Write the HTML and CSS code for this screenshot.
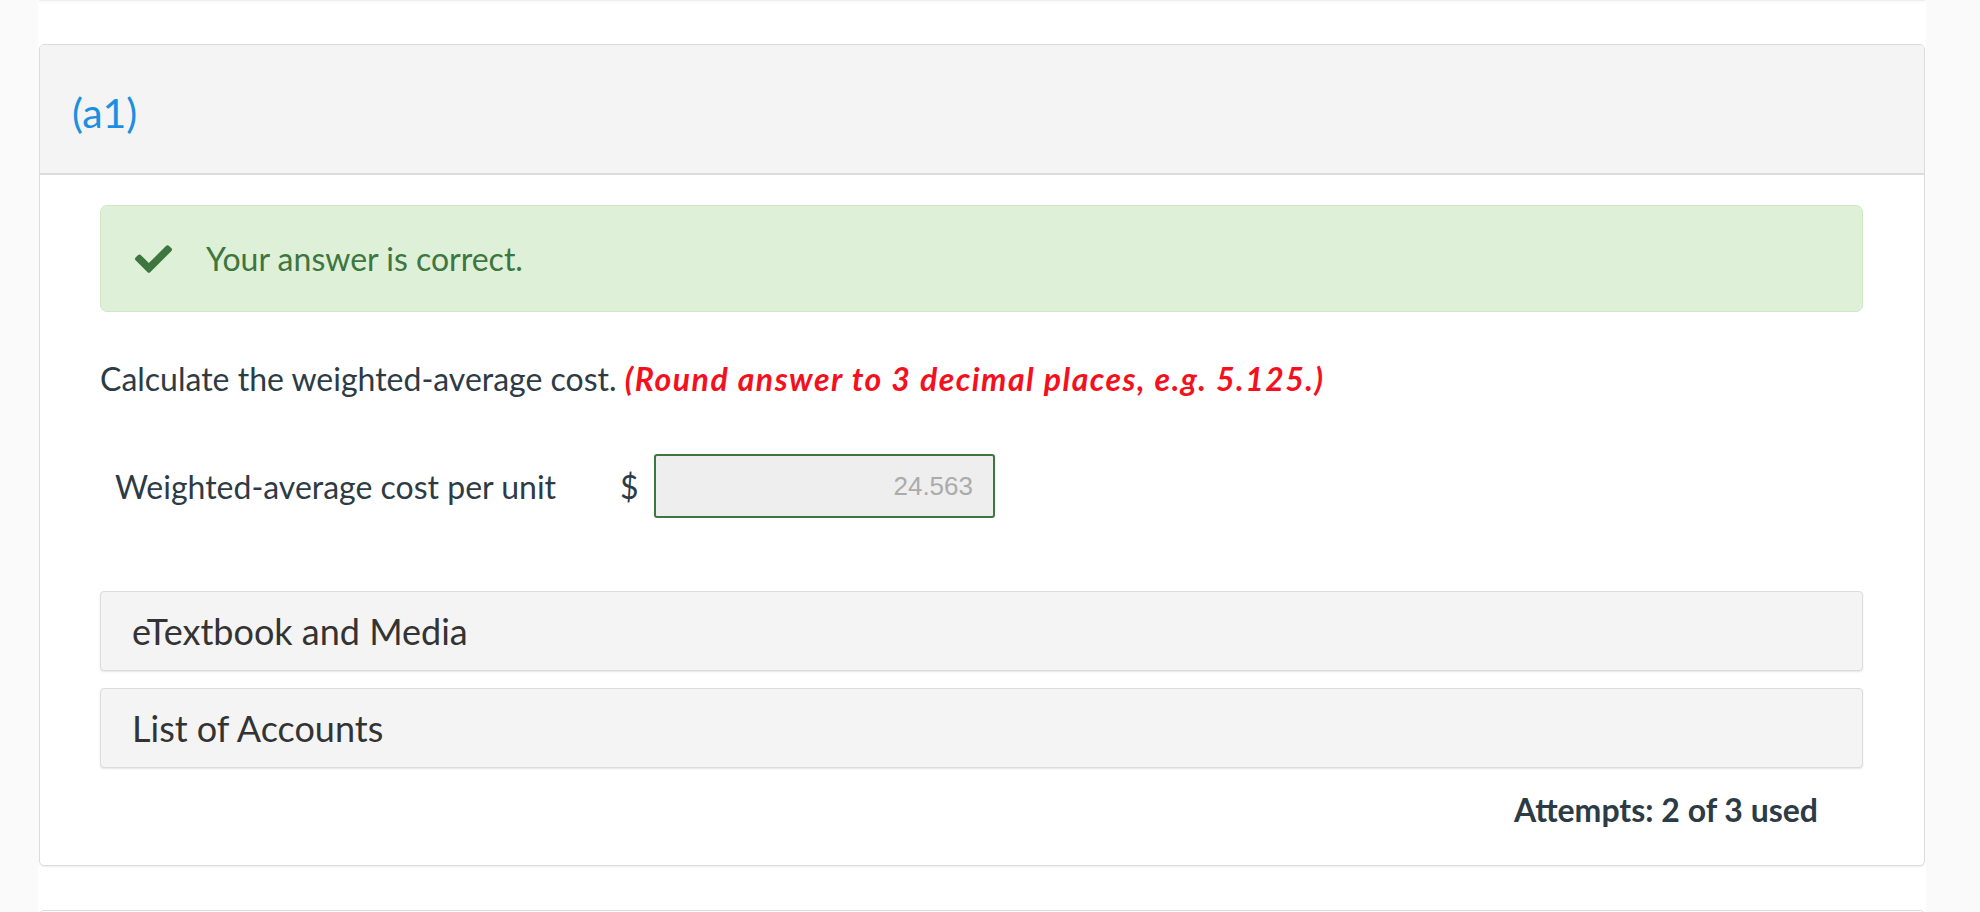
FILE: index.html
```html
<!DOCTYPE html>
<html>
<head>
<title>Question (a1)</title>
<link rel="stylesheet" href="styles.css">
</head>
<body>
    <div class="page">
        <div class="prev-card"></div>

        <div class="card">
            <div class="card-header">
                <span class="part-label">(a1)</span>
            </div>
            <div class="card-body">
                <div class="alert-success">
                    <svg class="check-icon" viewBox="0 64 512 384" aria-hidden="true">
                        <path d="M173.9 439.4l-166.4-166.4c-10-10-10-26.2 0-36.2l36.2-36.2c10-10 26.2-10 36.2 0L192 312.7 432.1 72.6c10-10 26.2-10 36.2 0l36.2 36.2c10 10 10 26.2 0 36.2l-294.4 294.4c-10 10-26.2 10-36.2 0z"/>
                    </svg>
                    <span>Your answer is correct.</span>
                </div>

                <p class="question">Calculate the weighted-average cost. <em class="hint">(Round answer to 3 decimal places, e.g. 5.125.)</em></p>

                <div class="answer-row">
                    <label class="answer-label" for="answer">Weighted-average cost per unit</label>
                    <span class="currency">$</span>
                    <input type="text" id="answer" class="answer-input" value="24.563" disabled>
                </div>

                <div class="panel">eTextbook and Media</div>
                <div class="panel">List of Accounts</div>

                <div class="attempts">Attempts: 2 of 3 used</div>
            </div>
        </div>

        <div class="next-card"></div>
    </div>
</body>
</html>
```

FILE: styles.css
```css
body {
    margin: 0;
    padding: 0;
    background-color: #fafafa;
    font-family: Lato, "Open Sans", sans-serif;
    color: #2d3b45;
}

.page {
    margin-left: 38px;
    width: 1888px;
    height: 912px;
    background-color: white;
    overflow: hidden;
}

.prev-card {
    height: 1px;
    margin: 0 1px;
    background-color: #eee;
    box-shadow: 0 1px 3px rgba(0, 0, 0, 0.08);
}

.card {
    margin: 43px 1px 0 1px;
    border: 1px solid #dcdcdc;
    border-radius: 5px;
    box-shadow: 0 1px 2px rgba(0, 0, 0, 0.08);
    overflow: hidden;
}

.card-header {
    height: 122px;
    background-color: #f4f4f4;
    border-bottom: 2px solid #dcdcdc;
    padding-left: 32px;
    padding-top: 6px;
    display: flex;
    align-items: center;
}

.part-label {
    font-size: 41px;
    color: #1b8fe0;
}

.card-body {
    padding: 30px 61px 36px 60px;
}

.alert-success {
    height: 105px;
    background-color: #dff0d8;
    border: 1px solid #d0e6c4;
    border-radius: 7px;
    display: flex;
    align-items: center;
    padding-left: 34px;
    color: #3d763e;
    font-size: 32px;
}

.check-icon {
    width: 37px;
    height: 28px;
    fill: #3d763e;
    margin-right: 34px;
}

.question {
    margin: 47px 0 0 0;
    font-size: 32px;
    line-height: 40px;
}

.hint {
    color: #f5101e;
    font-weight: bold;
    letter-spacing: 1.5px;
}

.answer-row {
    display: flex;
    align-items: center;
    margin-top: 55px;
    padding-left: 15px;
}

.answer-label {
    font-size: 32px;
    width: 505px;
}

.currency {
    font-size: 32px;
    width: 34px;
}

.answer-input {
    width: 309px;
    height: 60px;
    padding: 0 20px 0 8px;
    border: 2px solid #3d763e;
    border-radius: 3px;
    background-color: #eee;
    font-family: "Liberation Sans", Arial, sans-serif;
    font-size: 26px;
    color: #ababab;
    text-align: right;
}

.panel {
    height: 78px;
    margin-top: 17px;
    background-color: #f4f4f4;
    border: 1px solid #dcdcdc;
    border-radius: 4px;
    box-shadow: 0 1px 2px rgba(0, 0, 0, 0.1);
    padding-left: 31px;
    display: flex;
    align-items: center;
    font-size: 36px;
    color: #333;
}

.answer-row + .panel {
    margin-top: 73px;
}

.attempts {
    margin-top: 22px;
    padding-right: 45px;
    text-align: right;
    font-size: 32px;
    font-weight: bold;
}

.next-card {
    height: 10px;
    margin: 44px 1px 0 1px;
    border: 1px solid #dcdcdc;
    border-radius: 5px;
}
```
